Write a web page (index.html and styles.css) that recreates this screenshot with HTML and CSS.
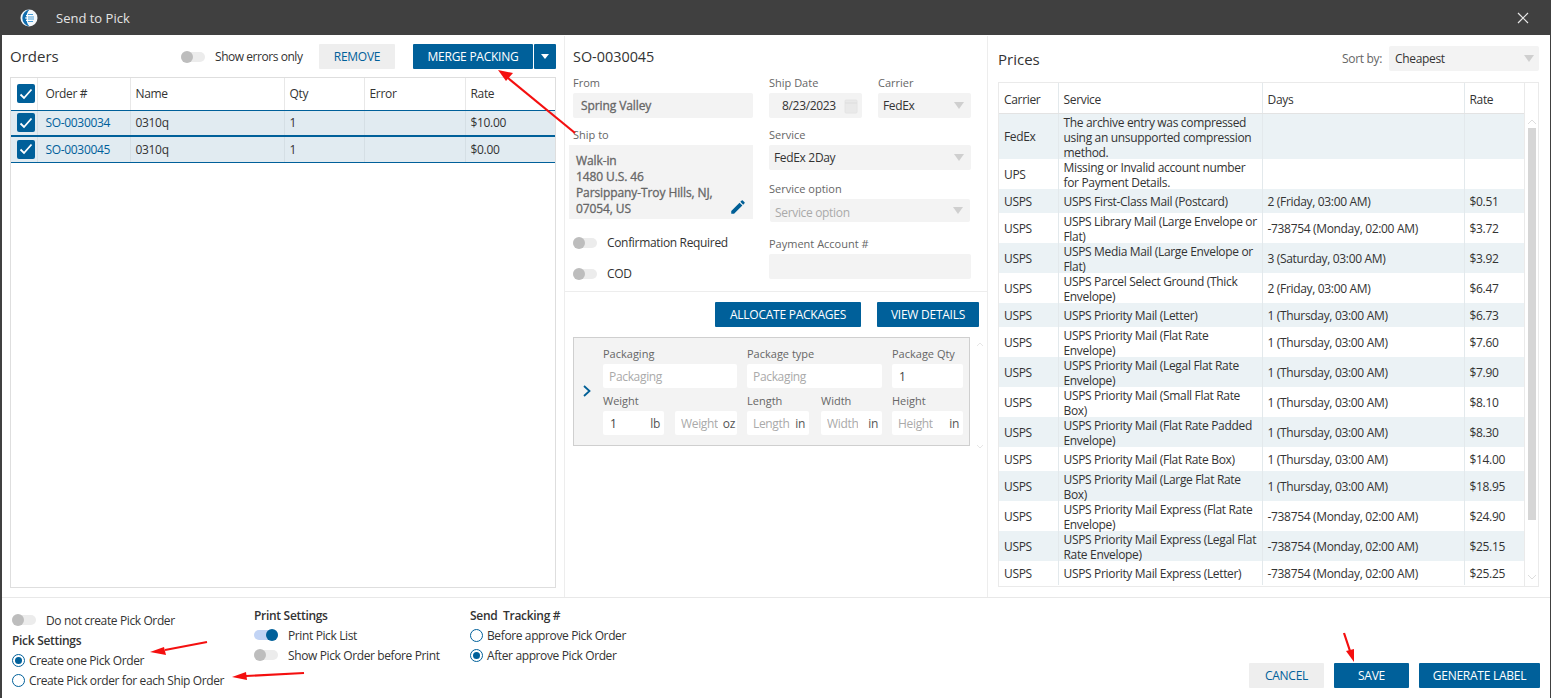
FILE: index.html
```html
<!DOCTYPE html>
<html lang="en">
<head>
<meta charset="utf-8">
<title>Send to Pick</title>
<link rel="stylesheet" href="styles.css">
</head>
<body>
<div class="window">
  <header class="titlebar">
    <svg class="logo" width="18" height="18" viewBox="0 0 18 18"><circle cx="9" cy="9" r="8.500" fill="#f4f8fb"/><path d="M9.500.6a8.500 8.500 0 0 0 0 16.800C7 15 6.500 12 6.500 9s.5-6 3-8.400z" fill="#0f6cad"/><path d="M6 6.500h5M5 9h8M6 11.500h5" stroke="#fff" stroke-width="1"/><path d="M8 5.500h5M8 8h6M8 10h6M8 12.500h5" stroke="#4a9fd8" stroke-width="1"/></svg>
    <span class="title">Send to Pick</span>
    <svg class="close" width="12" height="12" viewBox="0 0 12 12"><path d="M1 1l10 10M11 1L1 11" stroke="#e8e8e8" stroke-width="1.200"/></svg>
  </header>
  <main class="main">
    <section class="pane orders">
      <div class="orders-head">
        <h2 class="heading orders-title">Orders</h2>
        <span class="toggle"><i class="track"></i><i class="knob"></i></span>
        <span class="toggle-label">Show errors only</span>
        <button class="btn btn-light remove">REMOVE</button>
        <button class="btn btn-primary merge">MERGE PACKING</button>
        <button class="btn btn-primary caret"><i class="tri tri-white"></i></button>
      </div>
      <div class="orders-box">
        <table class="orders-table">
          <colgroup><col class="oc1"><col class="oc2"><col class="oc3"><col class="oc4"><col class="oc5"><col class="oc6"></colgroup>
          <thead><tr><th class="cbcell"><span class="check"><svg width="14" height="12" viewBox="0 0 14 12"><path d="M1.500 6.500l3.500 3.500 7.500-8.500" stroke="#fff" stroke-width="1.800" fill="none"/></svg></span></th><th class="ordercell">Order #</th><th>Name</th><th>Qty</th><th>Error</th><th>Rate</th></tr></thead>
          <tbody>
            <tr class="r1"><td class="cbcell"><span class="check"><svg width="14" height="12" viewBox="0 0 14 12"><path d="M1.500 6.500l3.500 3.500 7.500-8.500" stroke="#fff" stroke-width="1.800" fill="none"/></svg></span></td><td class="link ordercell">SO-0030034</td><td>0310q</td><td>1</td><td></td><td>$10.00</td></tr>
            <tr class="r2"><td class="cbcell"><span class="check"><svg width="14" height="12" viewBox="0 0 14 12"><path d="M1.500 6.500l3.500 3.500 7.500-8.500" stroke="#fff" stroke-width="1.800" fill="none"/></svg></span></td><td class="link ordercell">SO-0030045</td><td>0310q</td><td>1</td><td></td><td>$0.00</td></tr>
          </tbody>
        </table>
      </div>
    </section>

    <section class="pane details">
      <div class="details-top">
        <h3 class="so">SO-0030045</h3>
        <div class="form">
          <div class="form-left">
            <label class="lbl lbl-in">From</label>
            <div class="field field-in muted bold">Spring Valley</div>
            <label class="lbl lbl-in shipto-lbl">Ship to</label>
            <div class="address">Walk-in<br>1480 U.S. 46<br>Parsippany-Troy Hills, NJ,<br>07054, US
              <svg class="pencil" width="18" height="18" viewBox="0 0 24 24"><path d="M3 17.250V21h3.750L17.810 9.940l-3.750-3.750L3 17.250zM20.710 7.040a1 1 0 0 0 0-1.410l-2.340-2.340a1 1 0 0 0-1.410 0l-1.830 1.830 3.750 3.750 1.830-1.830z" fill="#005f96"/></svg>
            </div>
            <div class="switch-row sw-conf"><span class="toggle"><i class="track"></i><i class="knob"></i></span><span>Confirmation Required</span></div>
            <div class="switch-row sw-cod"><span class="toggle"><i class="track"></i><i class="knob"></i></span><span>COD</span></div>
          </div>
          <div class="form-right">
            <div class="date-carrier">
              <div class="col-date"><label class="lbl">Ship Date</label>
                <div class="field date">8/23/2023<svg class="cal" width="14" height="16" viewBox="0 0 14 16"><rect x="1" y="2" width="12" height="13" rx="1" fill="#e9e9e9" stroke="#e4e4e4"/><path d="M1 5h12" stroke="#ddd"/></svg></div></div>
              <div class="col-carrier"><label class="lbl">Carrier</label>
                <div class="field select">FedEx<i class="tri"></i></div></div>
            </div>
            <label class="lbl lbl-service">Service</label>
            <div class="field select">FedEx 2Day<i class="tri"></i></div>
            <label class="lbl lbl-option">Service option</label>
            <div class="field select option">Service option<i class="tri"></i></div>
            <label class="lbl lbl-pay">Payment Account #</label>
            <div class="field"></div>
          </div>
        </div>
      </div>
      <div class="details-bottom">
        <div class="pkg-actions">
          <button class="btn btn-primary alloc">ALLOCATE PACKAGES</button>
          <button class="btn btn-primary view">VIEW DETAILS</button>
        </div>
        <div class="pkg-wrap">
          <div class="pkg">
            <svg class="chev" width="10" height="14" viewBox="0 0 10 14"><path d="M2 2l5.500 5-5.500 5" stroke="#005f96" stroke-width="1.800" fill="none"/></svg>
            <div class="pkg-grid">
              <div class="pf w134"><label>Packaging</label><div class="inp ph">Packaging</div></div>
              <div class="pf w135"><label>Package type</label><div class="inp ph">Packaging</div></div>
              <div class="pf w71"><label>Package Qty</label><div class="inp val">1</div></div>
              <div class="pf-pair">
                <div class="pf w61"><label>Weight</label><div class="inp val split"><span>1</span><em>lb</em></div></div>
                <div class="pf w62"><label>&nbsp;</label><div class="inp ph split oz"><span>Weight</span><em>oz</em></div></div>
              </div>
              <div class="pf-pair">
                <div class="pf w62"><label>Length</label><div class="inp ph split"><span>Length</span><em>in</em></div></div>
                <div class="pf w61"><label>Width</label><div class="inp ph split"><span>Width</span><em>in</em></div></div>
              </div>
              <div class="pf w71"><label>Height</label><div class="inp ph split"><span>Height</span><em>in</em></div></div>
            </div>
          </div>
          <div class="faint-scroll"><svg width="8" height="5" viewBox="0 0 8 5"><path d="M1 4l3-3 3 3" stroke="#e6e6e6" fill="none"/></svg><svg width="8" height="5" viewBox="0 0 8 5"><path d="M1 1l3 3 3-3" stroke="#e6e6e6" fill="none"/></svg></div>
        </div>
      </div>
    </section>

    <section class="pane prices">
      <div class="prices-head">
        <h2 class="heading prices-title">Prices</h2>
        <span class="sort-lbl">Sort by:</span>
        <div class="field select sort">Cheapest<i class="tri"></i></div>
      </div>
      <div class="prices-box">
        <table class="prices-table">
          <colgroup><col class="pc1"><col class="pc2"><col class="pc3"><col class="pc4"></colgroup>
          <thead><tr><th>Carrier</th><th>Service</th><th>Days</th><th>Rate</th></tr></thead>
          <tbody>
            <tr class="rh46"><td>FedEx</td><td>The archive entry was compressed<br>using an unsupported compression<br>method.</td><td></td><td></td></tr>
            <tr class="rh30"><td>UPS</td><td>Missing or Invalid account number<br>for Payment Details.</td><td></td><td></td></tr>
            <tr class="rh24"><td>USPS</td><td>USPS First-Class Mail (Postcard)</td><td>2 (Friday, 03:00 AM)</td><td>$0.51</td></tr>
            <tr class="rh30"><td>USPS</td><td>USPS Library Mail (Large Envelope or<br>Flat)</td><td>-738754 (Monday, 02:00 AM)</td><td>$3.72</td></tr>
            <tr class="rh30"><td>USPS</td><td>USPS Media Mail (Large Envelope or<br>Flat)</td><td>3 (Saturday, 03:00 AM)</td><td>$3.92</td></tr>
            <tr class="rh30"><td>USPS</td><td>USPS Parcel Select Ground (Thick<br>Envelope)</td><td>2 (Friday, 03:00 AM)</td><td>$6.47</td></tr>
            <tr class="rh24"><td>USPS</td><td>USPS Priority Mail (Letter)</td><td>1 (Thursday, 03:00 AM)</td><td>$6.73</td></tr>
            <tr class="rh30"><td>USPS</td><td>USPS Priority Mail (Flat Rate<br>Envelope)</td><td>1 (Thursday, 03:00 AM)</td><td>$7.60</td></tr>
            <tr class="rh30"><td>USPS</td><td>USPS Priority Mail (Legal Flat Rate<br>Envelope)</td><td>1 (Thursday, 03:00 AM)</td><td>$7.90</td></tr>
            <tr class="rh30"><td>USPS</td><td>USPS Priority Mail (Small Flat Rate<br>Box)</td><td>1 (Thursday, 03:00 AM)</td><td>$8.10</td></tr>
            <tr class="rh30"><td>USPS</td><td>USPS Priority Mail (Flat Rate Padded<br>Envelope)</td><td>1 (Thursday, 03:00 AM)</td><td>$8.30</td></tr>
            <tr class="rh24"><td>USPS</td><td>USPS Priority Mail (Flat Rate Box)</td><td>1 (Thursday, 03:00 AM)</td><td>$14.00</td></tr>
            <tr class="rh30"><td>USPS</td><td>USPS Priority Mail (Large Flat Rate<br>Box)</td><td>1 (Thursday, 03:00 AM)</td><td>$18.95</td></tr>
            <tr class="rh30"><td>USPS</td><td>USPS Priority Mail Express (Flat Rate<br>Envelope)</td><td>-738754 (Monday, 02:00 AM)</td><td>$24.90</td></tr>
            <tr class="rh30"><td>USPS</td><td>USPS Priority Mail Express (Legal Flat<br>Rate Envelope)</td><td>-738754 (Monday, 02:00 AM)</td><td>$25.15</td></tr>
            <tr class="rh24"><td>USPS</td><td>USPS Priority Mail Express (Letter)</td><td>-738754 (Monday, 02:00 AM)</td><td>$25.25</td></tr>
          </tbody>
        </table>
        <div class="scroll">
          <svg width="10" height="6" viewBox="0 0 10 6"><path d="M1 5l4-4 4 4" stroke="#ddd" fill="none"/></svg>
          <div class="thumb"></div>
          <svg width="10" height="6" viewBox="0 0 10 6"><path d="M1 1l4 4 4-4" stroke="#ddd" fill="none"/></svg>
        </div>
      </div>
    </section>
  </main>

  <footer class="footer">
    <div class="fcol fcol1">
      <div class="switch-row"><span class="toggle"><i class="track"></i><i class="knob"></i></span><span>Do not create Pick Order</span></div>
      <strong class="fhead pick-head">Pick Settings</strong>
      <div class="radio-row"><span class="radio on"></span>Create one Pick Order</div>
      <div class="radio-row"><span class="radio"></span>Create Pick order for each Ship Order</div>
    </div>
    <div class="fcol fcol2">
      <strong class="fhead">Print Settings</strong>
      <div class="switch-row"><span class="toggle on"><i class="track"></i><i class="knob"></i></span><span>Print Pick List</span></div>
      <div class="switch-row"><span class="toggle"><i class="track"></i><i class="knob"></i></span><span>Show Pick Order before Print</span></div>
    </div>
    <div class="fcol fcol3">
      <strong class="fhead">Send&nbsp; Tracking #</strong>
      <div class="radio-row"><span class="radio"></span>Before approve Pick Order</div>
      <div class="radio-row"><span class="radio on"></span>After approve Pick Order</div>
    </div>
    <div class="factions">
      <button class="btn btn-light cancel">CANCEL</button>
      <button class="btn btn-primary save">SAVE</button>
      <button class="btn btn-primary gen">GENERATE LABEL</button>
    </div>
  </footer>

  <svg class="arrows" width="1551" height="698" viewBox="0 0 1551 698">
    <g stroke="#f40f0f" stroke-width="2.200" fill="#f40f0f">
      <path d="M575 133L508 78"/><path d="M498 70l15 3-7 8z" stroke="none"/>
      <path d="M207 642L165 650"/><path d="M150 652l14-5 2 8z" stroke="none"/>
      <path d="M304 673L246 676"/><path d="M232 677l14-5 1 8z" stroke="none"/>
      <path d="M1344 633L1350 651"/><path d="M1354 662l-8-11 8-2z" stroke="none"/>
    </g>
  </svg>
</div>
</body>
</html>
```

FILE: styles.css
```css
* { box-sizing: border-box; }
html, body { margin: 0; padding: 0; }
body { width: 1551px; height: 698px; overflow: hidden; background: #fff; color: #333; font: 12px/15px "Open Sans", "Noto Sans", sans-serif; letter-spacing: -0.33px; }
h2, h3, label, strong { margin: 0; font-weight: normal; }
button { font: inherit; letter-spacing: -0.25px; border: 0; margin: 0; padding: 0; }
.window { position: relative; width: 1551px; height: 698px; border-left: 2px solid #404040; border-right: 1px solid #404040; display: flex; flex-direction: column; }
.titlebar { height: 35px; margin: 0 -1px 1px -2px; background: #404040; display: flex; align-items: center; padding: 0 22px 0 20px; color: #e4e4e4; flex: none; }
.logo { flex: none; }
.title { margin-left: 18px; font-size: 13px; letter-spacing: 0; padding-top: 1px; }
.close { margin-left: auto; }
.main { height: 561px; display: flex; flex: none; }
.pane { height: 100%; border-right: 1px solid #ededed; }
.orders { width: 563px; padding: 8px 8px 9px 8px; display: flex; flex-direction: column; }
.orders-head { display: flex; align-items: center; height: 25px; margin-bottom: 8px; flex: none; }
.heading { font-size: 15px; letter-spacing: 0; color: #333; }
.orders-title { margin-right: auto; }
.toggle { position: relative; display: inline-block; width: 24px; height: 12px; flex: none; }
.track { position: absolute; left: 0; top: 1px; width: 24px; height: 10px; border-radius: 5px; background: #ececec; }
.knob { position: absolute; left: 0; top: 0; width: 12px; height: 12px; border-radius: 50%; background: #bdbdbd; }
.toggle.on .track { background: #c2d4f5; }
.toggle.on .knob { left: 12px; background: #00609a; }
.toggle-label { margin-left: 10px; white-space: nowrap; width: 88px; flex: none; letter-spacing: -0.45px; }
.btn { height: 25px; display: inline-flex; align-items: center; justify-content: center; border-radius: 1px; flex: none; }
.btn-primary { background: #00609a; color: #fff; }
.btn-light { background: #eeeeee; color: #00609a; }
.remove { width: 76px; margin-left: 16px; }
.merge { width: 120px; margin-left: 18px; }
.caret { width: 22px; margin-left: 1px; }
.tri { display: block; width: 0; height: 0; border-left: 5px solid transparent; border-right: 5px solid transparent; border-top: 7px solid #cfcfcf; }
.tri-white { border-left-width: 4px; border-right-width: 4px; border-top: 5px solid #fff; }
.orders-box { flex: 1; border: 1px solid #dedede; }
table { border-collapse: collapse; table-layout: fixed; width: 100%; }
th, td { text-align: left; font-weight: normal; padding: 0 0 0 6px; color: #333; }
.oc1 { width: 26px; } .oc2 { width: 93px; } .oc3 { width: 154px; } .oc4 { width: 80px; } .oc5 { width: 101px; } .oc6 { width: 90px; }
.orders-table th { height: 32px; border-left: 1px solid #e8e8e8; border-bottom: 1px solid #00609a; }
.orders-table th:first-child, .orders-table td:first-child { border-left: 0; }
.orders-table td { border-left: 1px solid #d5dfe5; background: #e1ebf1; }
.r1 td { height: 26px; border-bottom: 2px solid #00609a; }
.r2 td { height: 26px; border-bottom: 1px solid #00609a; }
.orders-table .ordercell { padding-left: 8px; }
.orders-table th:nth-child(n+3), .orders-table td:nth-child(n+3) { padding-left: 5px; }
.cbcell { padding: 0 0 0 6px; }
.check { width: 18px; height: 19px; background: #00609a; border-radius: 2px; display: flex; align-items: center; justify-content: center; }
.link { color: #00609a; }
.details { width: 423px; display: flex; flex-direction: column; }
.details-top { height: 256px; padding: 12px 0 0 4px; border-bottom: 1px solid #ededed; flex: none; }
.so { font-size: 14.4px; letter-spacing: 0; line-height: 18px; margin: 0 0 9px 4px; color: #333; font-weight: normal; }
.form { display: flex; }
.form-left { width: 184px; }
.form-right { width: 202px; margin-left: 16px; }
.lbl { display: block; font-size: 11px; color: #666; line-height: 15px; letter-spacing: 0; }
.lbl-in { margin-left: 4px; }
.field { height: 25px; background: #f3f3f3; border-radius: 2px; margin-top: 3px; display: flex; align-items: center; padding: 0 5px; color: #333; }
.field-in { margin-left: 4px; padding: 0 8px; }
.muted { color: #666; }
.bold { -webkit-text-stroke: 0.3px #666; letter-spacing: -0.1px; }
.shipto-lbl { margin-top: 9px; }
.address { position: relative; margin-top: 3px; height: 74px; background: #f3f3f3; padding: 8px 7px; color: #666; line-height: 16px; -webkit-text-stroke: 0.3px #666; letter-spacing: -0.1px; }
.pencil { position: absolute; right: 6px; bottom: 3px; }
.switch-row { display: flex; align-items: center; gap: 10px; }
.sw-conf { margin: 16px 0 0 4px; height: 15px; }
.sw-cod { margin: 16px 0 0 4px; height: 15px; }
.date-carrier { display: flex; gap: 16px; }
.col-date { width: 93px; }
.col-carrier { width: 93px; }
.date { padding: 0 0 0 13px; position: relative; }
.cal { position: absolute; right: 4px; top: 5px; }
.select { justify-content: space-between; padding-right: 7px; }
.lbl-service { margin-top: 9px; }
.lbl-option { margin-top: 11px; }
.option { height: 23px; margin-left: 1px; margin-right: 1px; padding-top: 3px; color: #aaa; }
.option .tri { margin-top: -3px; }
.lbl-pay { margin-top: 14px; }
.details-bottom { padding: 10px 8px 0 8px; }
.pkg-actions { display: flex; justify-content: flex-end; gap: 16px; }
.alloc { width: 146px; } .view { width: 102px; }
.pkg-wrap { margin-top: 10px; display: flex; }
.pkg { width: 398px; height: 109px; background: #f3f3f3; border: 1px solid #cfcfcf; display: flex; align-items: center; padding: 0 6px 0 8px; }
.chev { flex: none; margin-bottom: 1px; }
.pkg-grid { margin: 8px 0 0 11px; align-self: flex-start; display: grid; grid-template-columns: 134px 135px 71px; column-gap: 10px; row-gap: 5px; }
.pf label { display: block; font-size: 11px; color: #666; line-height: 15px; margin-bottom: 3px; letter-spacing: 0; }
.pf-pair { display: flex; justify-content: space-between; }
.w134 { width: 134px; } .w135 { width: 135px; } .w71 { width: 71px; } .w61 { width: 61px; } .w62 { width: 62px; }
.inp { height: 24px; background: #fff; border-radius: 2px; display: flex; align-items: center; padding: 0 6px; }
.ph { color: #aaa; }
.val { color: #444; padding-left: 7px; }
.split { justify-content: space-between; padding-right: 4px; }
.split em { font-style: normal; color: #555; }
.split span { overflow: hidden; }
.oz { padding-right: 2px; padding-left: 6px; }
.faint-scroll { margin-left: 6px; height: 112px; display: flex; flex-direction: column; justify-content: space-between; padding: 5px 0 0 0; }
.prices { width: 562px; padding: 10px 11px 0 10px; border-right: 0; }
.prices-head { display: flex; align-items: center; height: 25px; }
.prices-title { margin-top: 2px; }
.sort-lbl { margin-left: auto; color: #666; }
.sort { width: 150px; margin: 0 0 0 7px; padding: 0 5px 0 6px; }
.prices-box { margin-top: 11px; width: 541px; height: 505px; border: 1px solid #eaeaea; display: flex; }
.prices-table { width: 525px; flex: none; align-self: flex-start; }
.pc1 { width: 59px; } .pc2 { width: 204px; } .pc3 { width: 202px; } .pc4 { width: 60px; }
.prices-table th { height: 30px; border-left: 1px solid #e3e9ec; border-bottom: 1px solid #e3e3e3; padding: 3px 0 0 5px; }
.prices-table th:first-child, .prices-table td:first-child { border-left: 0; }
.prices-table td { border-left: 1px solid #e3e9ec; padding: 0 0 0 5px; line-height: 15px; vertical-align: middle; }
.prices-table tbody tr:nth-child(odd) td { background: #ebf2f5; }
.rh46 td { height: 46px; } .rh30 td { height: 30px; } .rh24 td { height: 24px; }
.rh46 td:nth-child(2)::before, .rh30 td:nth-child(2)::before { content: ""; display: block; height: 1px; }
.rh46 td:nth-child(2)::after, .rh30 td:nth-child(2)::after { content: ""; display: block; height: 0; margin-top: -1px; }
.scroll { flex: 1; display: flex; flex-direction: column; align-items: center; padding-top: 36px; border-left: 1px solid #eaeaea; }
.thumb { width: 8px; height: 392px; background: #d6d6d6; margin: 3px 0 54px; }
.footer { height: 101px; border-top: 1px solid #e8e8e8; position: relative; display: flex; flex: none; letter-spacing: -0.38px; }
.fcol { display: flex; flex-direction: column; align-items: flex-start; }
.fcol1 { width: 240px; padding: 12px 0 0 10px; }
.fcol2 { width: 216px; padding: 10px 0 0 12px; }
.fcol3 { padding: 10px 0 0 12px; }
.fcol .switch-row, .radio-row { height: 20px; display: flex; align-items: center; white-space: nowrap; }
.fcol .switch-row { gap: 10px; }
.fhead { font-weight: 600; height: 17px; color: #333; letter-spacing: -0.3px; }
.pick-head { margin-top: 3px; height: 17px; }
.radio-row { gap: 4px; }
.radio { width: 13px; height: 13px; border-radius: 50%; border: 1px solid #00609a; background: #fff; flex: none; position: relative; }
.radio.on::after { content: ""; position: absolute; left: 2px; top: 2px; width: 7px; height: 7px; border-radius: 50%; background: #00609a; }
.factions { margin-left: auto; margin-top: 65px; display: flex; gap: 10px; padding-right: 10px; height: 25px; }
.cancel, .save { width: 75px; } .gen { width: 121px; }
.arrows { position: absolute; left: -2px; top: 0; pointer-events: none; }
```
